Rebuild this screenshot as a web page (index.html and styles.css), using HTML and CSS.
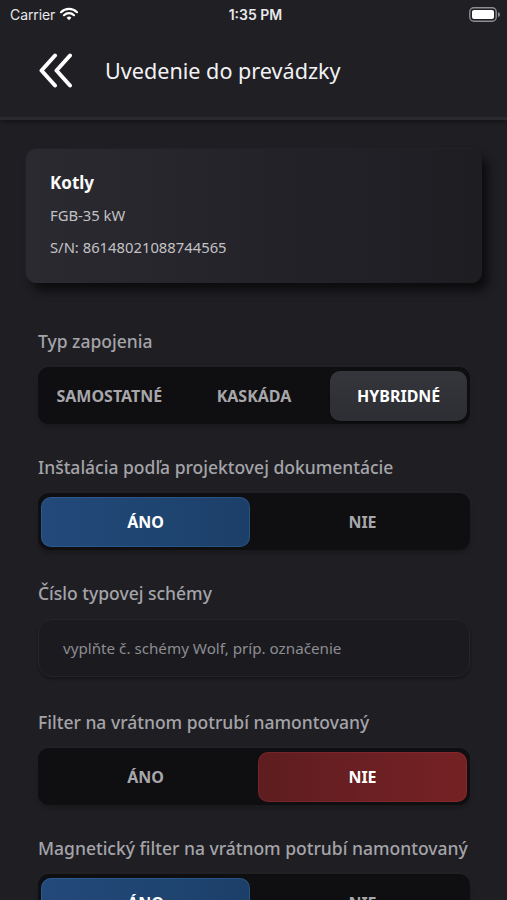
FILE: index.html
```html
<!DOCTYPE html>
<html lang="sk">
<head>
<meta charset="utf-8">
<link rel="stylesheet" href="styles.css">
</head>
<body>
<div class="screen">
  <header class="topbar">
    <div class="status">
      <div class="status-left">
        <span class="carrier">Carrier</span>
        <svg class="wifi" width="18" height="14" viewBox="0 0 18 14">
          <path d="M1 5.2 A11.5 11.5 0 0 1 17 5.2" fill="none" stroke="#fff" stroke-width="2.2" stroke-linecap="round"/>
          <path d="M4 8.2 A7.2 7.2 0 0 1 14 8.2" fill="none" stroke="#fff" stroke-width="2.2" stroke-linecap="round"/>
          <path d="M9 13.2 L6.6 10.8 A3.4 3.4 0 0 1 11.4 10.8 Z" fill="#fff"/>
        </svg>
      </div>
      <span class="time">1:35 PM</span>
      <div class="status-right">
        <svg class="battery" width="32" height="15" viewBox="0 0 32 15">
          <rect x="0.8" y="0.8" width="26.4" height="13.4" rx="4" fill="none" stroke="#8e8e93" stroke-width="1.4"/>
          <rect x="3" y="3" width="22" height="9" rx="2" fill="#fff"/>
          <path d="M29 5 Q31 5.5 31 7.5 Q31 9.5 29 10 Z" fill="#8e8e93"/>
        </svg>
      </div>
    </div>
    <nav class="nav">
      <svg class="back" width="36" height="36" viewBox="0 0 36 36">
        <path d="M17 2.5 L3.5 17.5 L17 32.5" fill="none" stroke="#fff" stroke-width="4" stroke-linecap="round" stroke-linejoin="round"/>
        <path d="M32 2.5 L18.5 17.5 L32 32.5" fill="none" stroke="#fff" stroke-width="4" stroke-linecap="round" stroke-linejoin="round"/>
      </svg>
      <h1 class="title">Uvedenie do prevádzky</h1>
    </nav>
  </header>

  <main class="content">
    <section class="card">
      <div class="card-title">Kotly</div>
      <div class="card-line">FGB-35 kW</div>
      <div class="card-line">S/N: 86148021088744565</div>
    </section>

    <div class="field">
      <div class="label">Typ zapojenia</div>
      <div class="seg seg-3">
        <div class="opt">SAMOSTATNÉ</div>
        <div class="opt">KASKÁDA</div>
        <div class="opt sel-gray">HYBRIDNÉ</div>
      </div>
    </div>

    <div class="field">
      <div class="label">Inštalácia podľa projektovej dokumentácie</div>
      <div class="seg seg-2">
        <div class="opt sel-blue">ÁNO</div>
        <div class="opt">NIE</div>
      </div>
    </div>

    <div class="field">
      <div class="label">Číslo typovej schémy</div>
      <div class="input">vyplňte č. schémy Wolf, príp. označenie</div>
    </div>

    <div class="field after-input">
      <div class="label">Filter na vrátnom potrubí namontovaný</div>
      <div class="seg seg-2">
        <div class="opt">ÁNO</div>
        <div class="opt sel-red">NIE</div>
      </div>
    </div>

    <div class="field">
      <div class="label">Magnetický filter na vrátnom potrubí namontovaný</div>
      <div class="seg seg-2">
        <div class="opt sel-blue">ÁNO</div>
        <div class="opt">NIE</div>
      </div>
    </div>
  </main>
</div>
</body>
</html>
```

FILE: styles.css
```css
* { box-sizing: border-box; }
html, body {
  margin: 0;
  padding: 0;
  background: #1f1e23;
}
body {
  width: 507px;
  height: 900px;
  overflow: hidden;
  font-family: "Noto Sans", "Open Sans", sans-serif;
  color: #fff;
}
.screen {
  display: flex;
  flex-direction: column;
}
.topbar {
  background: #201f24;
  border-bottom: 3px solid #2b2a2f;
  box-shadow: 0 2px 4px rgba(0,0,0,0.35);
}
.status {
  height: 28px;
  display: flex;
  align-items: center;
  justify-content: space-between;
  padding: 0 6px 0 10px;
}
.status-left {
  display: flex;
  align-items: center;
  gap: 5px;
  width: 120px;
}
.carrier {
  font-family: "Inter", "Liberation Sans", sans-serif;
  font-size: 14px;
  color: #e8e8ea;
  letter-spacing: -0.1px;
}
.wifi { margin-top: -1px; }
.time {
  font-family: "Inter", "Liberation Sans", sans-serif;
  font-size: 14px;
  font-weight: 600;
  color: #e8e8ea;
}
.status-right {
  width: 120px;
  display: flex;
  justify-content: flex-end;
}
.nav {
  height: 89px;
  display: flex;
  align-items: center;
  padding: 0 0 4px 38px;
}
.back { margin-right: 31px; }
.title {
  margin: 0;
  font-size: 21.6px;
  font-weight: 400;
  color: #f2f2f4;
}
.content {
  display: flex;
  flex-direction: column;
  padding: 29px 37px 0 38px;
}
.card {
  margin: 0 -12px 0 -12px;
  height: 134px;
  border-radius: 11px;
  background: linear-gradient(90deg, #2b2a30 0%, #242329 50%, #1e1d22 100%);
  box-shadow: 6px 8px 10px rgba(0,0,0,0.6), -1px -1px 2px rgba(255,255,255,0.03);
  padding: 23px 24px;
  display: flex;
  flex-direction: column;
}
.card-title {
  font-size: 17px;
  font-weight: 700;
  color: #fafafa;
  line-height: 22px;
}
.card-line {
  font-size: 14.8px;
  color: #c2c2c6;
  line-height: 18px;
  margin-top: 12px;
}
.card-line + .card-line { margin-top: 14px; }
.field {
  display: flex;
  flex-direction: column;
  margin-top: 32px;
}
.card + .field { margin-top: 47px; }
.field.after-input { margin-top: 34px; }
.label {
  font-size: 17.5px;
  font-weight: 500;
  color: #a4a4a9;
  line-height: 22px;
  height: 22px;
  margin-bottom: 15px;
  white-space: nowrap;
}
.seg {
  height: 57px;
  border-radius: 11px;
  background: #0f0e11;
  display: grid;
  column-gap: 8px;
  padding: 4px 3px 3px 3px;
  box-shadow: 0 0 6px rgba(255,255,255,0.05), 0 2px 4px rgba(0,0,0,0.4);
}
.seg-3 { grid-template-columns: 1fr 1fr 1fr; }
.seg-2 { grid-template-columns: 1fr 1fr; }
.opt {
  display: flex;
  align-items: center;
  justify-content: center;
  font-size: 16px;
  font-weight: 700;
  color: #a7a7ab;
  border-radius: 10px;
}
.sel-gray {
  background: linear-gradient(180deg, #34363b, #2c2e33);
  color: #ffffff;
  box-shadow: 0 1px 2px rgba(0,0,0,0.5);
}
.sel-blue {
  background: linear-gradient(90deg, #22497a 0%, #1e4470 60%, #1c3f68 100%);
  color: #ffffff;
  box-shadow: inset 0 0 0 1px rgba(80,140,210,0.25);
}
.sel-red {
  background: linear-gradient(90deg, #5e1d20 0%, #6d2023 60%, #752124 100%);
  color: #ffffff;
  box-shadow: inset 0 0 0 1px rgba(200,70,70,0.2);
}
.input {
  height: 58px;
  border-radius: 14px;
  background: #1b1a1f;
  border: 1px solid #26252b;
  display: flex;
  align-items: center;
  padding-left: 24px;
  font-size: 15.2px;
  color: #8d8d92;
  box-shadow: 0 2px 3px rgba(0,0,0,0.3);
}
```
